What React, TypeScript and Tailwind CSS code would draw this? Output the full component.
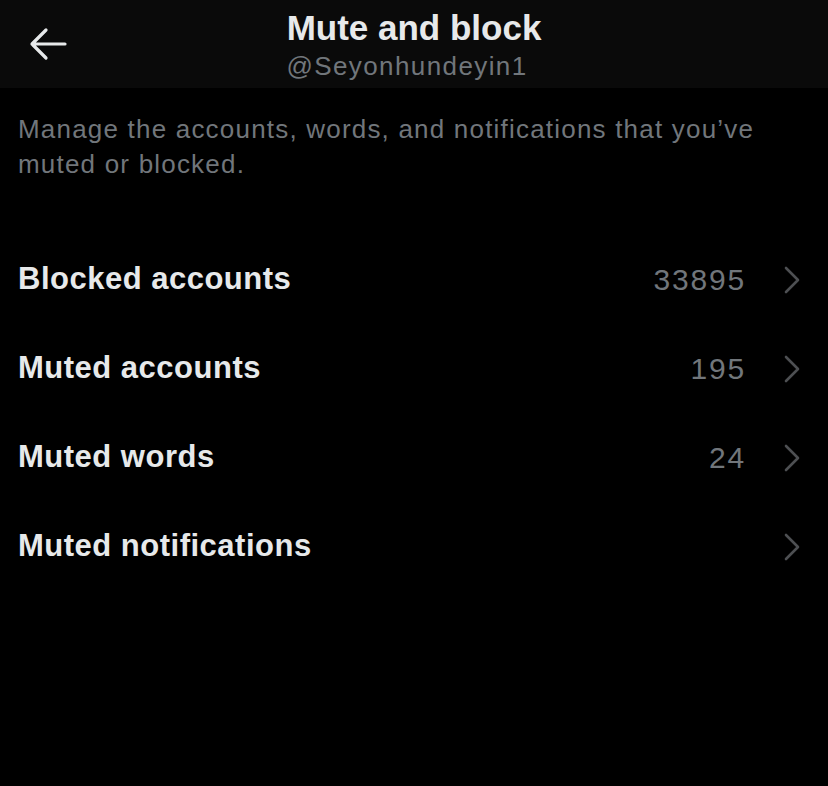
interface Row {
  label: string;
  count?: string;
}

const rows: Row[] = [
  { label: "Blocked accounts", count: "33895" },
  { label: "Muted accounts", count: "195" },
  { label: "Muted words", count: "24" },
  { label: "Muted notifications" },
];

const Chevron = () => (
  <svg width="18" height="28" viewBox="0 0 18 28" fill="none" className="shrink-0">
    <path d="M3 2 L15 14 L3 26" stroke="#4d4f52" strokeWidth="2.6" strokeLinecap="round" strokeLinejoin="round" />
  </svg>
);

// back arrow, drawn to match the iOS glyph (wider than tall)
const BackArrow = () => (
  <svg width="40" height="34" viewBox="0 0 40 34" fill="none">
    <path d="M4 17 H37 M18 3 L4 17 L18 31" stroke="#e7e9ea" strokeWidth="3.2" strokeLinecap="round" strokeLinejoin="round" />
  </svg>
);

const App = () => {
  return (
    <div
      className="w-[828px] h-[786px] bg-black text-[#e7e9ea] overflow-hidden"
      style={{ fontFamily: '"Liberation Sans", Arial, sans-serif' }}
    >
      {/* Header */}
      <div className="relative h-[88px] bg-[#0a0a0a] flex flex-col items-center pt-[9px]">
        <button className="absolute left-[28px] top-[27px]">
          <BackArrow />
        </button>
        <h1 className="text-[35px] leading-[38px] font-bold">Mute and block</h1>
        <p className="text-[26px] leading-[30px] text-[#71767b] mt-[4px] mr-[14px] tracking-[1.4px]">@Seyonhundeyin1</p>
      </div>

      {/* Description */}
      <p className="px-[18px] pt-[24px] text-[26px] leading-[35px] text-[#71767b] tracking-[1.2px]">
        Manage the accounts, words, and notifications that you’ve muted or blocked.
      </p>

      {/* Rows */}
      <div className="mt-[53px]">
        {rows.map((row) => (
          <div key={row.label} className="h-[89px] flex items-center pl-[18px] pr-[27px]">
            <span className="flex-1 text-[31px] font-bold tracking-[0.5px]">{row.label}</span>
            {row.count && (
              <span className="text-[30px] text-[#71767b] mr-[37px] tracking-[1.8px]">{row.count}</span>
            )}
            <Chevron />
          </div>
        ))}
      </div>
    </div>
  );
};

export default App;
